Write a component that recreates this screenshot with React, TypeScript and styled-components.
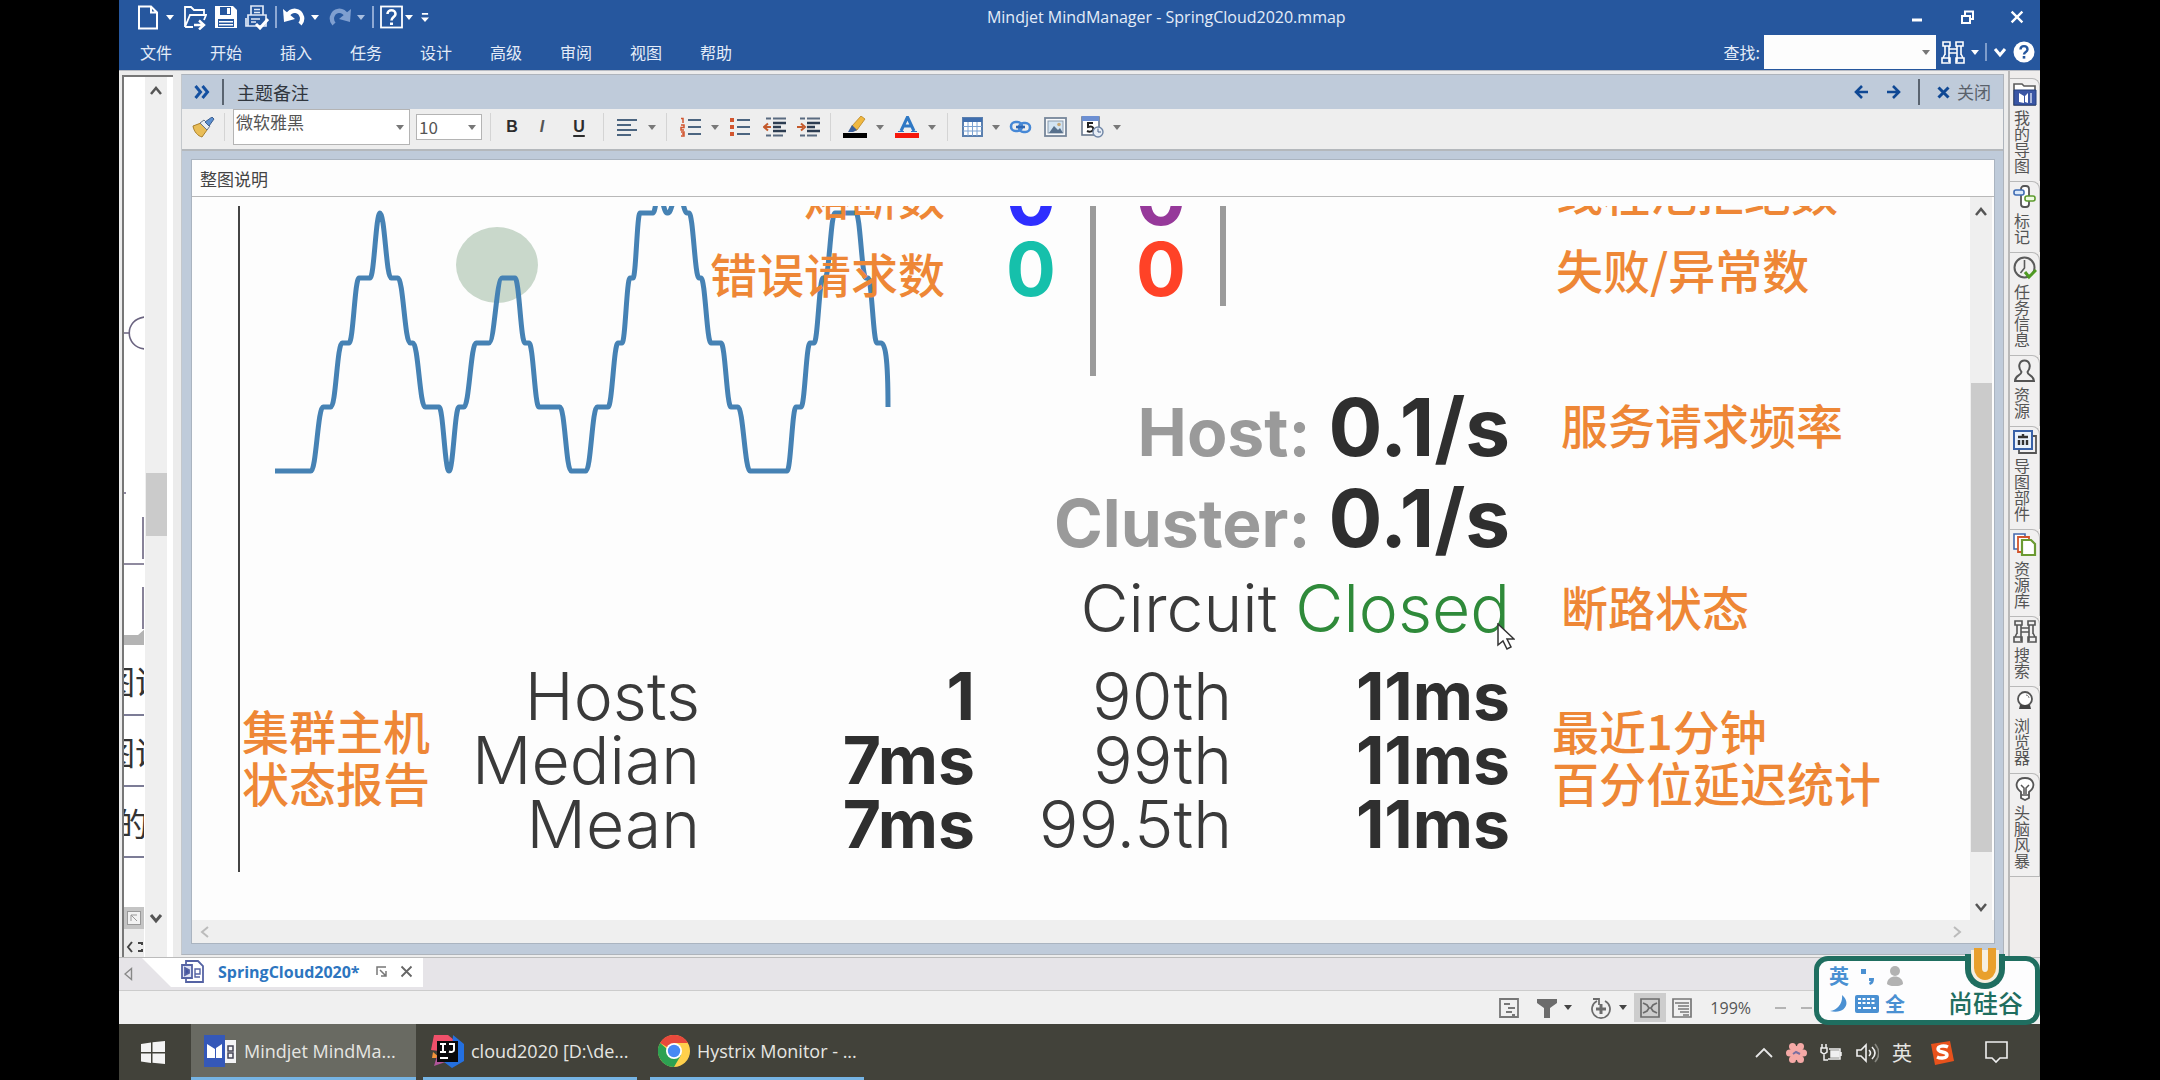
import React from "react";
import styled, { createGlobalStyle, css } from "styled-components";

const ui = `"Open Sans", "Noto Sans CJK SC", sans-serif`;
const cjk = `"Noto Sans CJK SC", sans-serif`;
const figureFont = `Inter, "Liberation Sans", "Noto Sans CJK SC", sans-serif`;

const GlobalStyle = createGlobalStyle`
  * { box-sizing: border-box; }
  body { margin: 0; background: #000; font-family: ${ui}; }
  button, input, select { font: inherit; color: inherit; margin: 0; }
  button { background: none; border: 0; padding: 0; display: inline-flex; align-items: center; justify-content: center; }
  svg { display: block; flex: none; }
`;

const Screen = styled.main`
  min-height: 100vh;
  padding: 0 120px 0 119px;
  display: flex;
  flex-direction: column;
`;

/* ---------- title and menu ---------- */
const Header = styled.header`
  background: #26579e;
  color: #fff;
  height: 70px;
  display: grid;
  grid-template-rows: 34px 36px;
`;
const TitleRow = styled.div`
  display: grid;
  grid-template-columns: 5fr auto 4fr;
  align-items: center;
`;
const QuickBar = styled.div`
  display: flex;
  align-items: center;
  padding-left: 19px;
`;
const Quick = styled.button<{ w: number }>`
  width: ${(p) => p.w}px;
  height: 28px;
  justify-content: flex-start;
`;
const QuickRule = styled.span`
  width: 2px;
  height: 22px;
  margin-right: 6px;
  background: #8ea9d4;
`;
const Title = styled.h1`
  margin: 0;
  font-size: 16px;
  font-weight: 400;
  line-height: 34px;
  color: #e4ecf8;
`;
const WindowButtons = styled.div`
  display: flex;
  justify-content: flex-end;
  padding-right: 10px;
  gap: 24px;
`;
const WindowButton = styled.button`
  width: 26px;
  height: 34px;
`;
const MenuRow = styled.div`
  display: flex;
  justify-content: space-between;
  padding-left: 2px;
`;
const Menus = styled.nav`
  display: flex;
`;
const Menu = styled.button`
  width: 70px;
  font: 16px/36px ${cjk};
  color: #e4ecf8;
`;
const Finder = styled.div`
  display: flex;
  align-items: center;
  padding-right: 5px;
`;
const FinderLabel = styled.label`
  font: 16px/36px ${cjk};
  color: #e4ecf8;
  padding-right: 4px;
`;
const FinderBox = styled.div`
  display: flex;
  align-items: center;
  width: 172px;
  height: 34px;
  padding-right: 6px;
  background: #fdfdfd;
  color: #777;
`;
const FinderInput = styled.input`
  flex: 1;
  min-width: 0;
  height: 34px;
  border: 0;
  background: transparent;
  color: #333;
  padding: 0 6px;
`;
const FinderTools = styled.div`
  display: flex;
  align-items: center;
  gap: 6px;
  padding-left: 5px;
`;

/* ---------- workspace ---------- */
const Workspace = styled.section`
  flex: 1;
  display: grid;
  grid-template-columns: 62px minmax(0, 1fr) 32px;
  background: #ececec;
  border-top: 1px solid #b8bcc4;
`;
const MapStrip = styled.aside`
  margin: 4px 8px 0 3px;
  display: grid;
  grid-template-columns: 20px 22px;
  column-gap: 1px;
  border-left: 2px solid #777;
  border-top: 2px solid #777;
  background: #fff;
`;
const MapCanvas = styled.div`
  overflow: hidden;
  display: flex;
  flex-direction: column;
`;
const MapNode = styled.div<{ shift: number }>`
  margin-left: ${(p) => p.shift}px;
  width: 96px;
  height: 71px;
  padding-top: 14px;
  font: 32px/42px ${cjk};
  color: #333;
  border-bottom: 2px solid #7c7c96;
`;
const MapFooter = styled.div`
  height: 50px;
  margin-top: auto;
  display: flex;
  flex-direction: column;
  align-items: center;
  gap: 12px;
  background: #ececec;
`;
const Track = styled.div`
  background: #efefef;
  display: flex;
  flex-direction: column;
  align-items: center;
  justify-content: space-between;
  color: #555;
  padding: 7px 0 32px;
`;
const Thumb = styled.div<{ top: number; tall: number }>`
  width: 21px;
  height: ${(p) => p.tall}px;
  margin: ${(p) => p.top}px 0 auto;
  background: #cbcbcb;
`;

const NotesPanel = styled.section`
  margin: 3px 4px 2px 0;
  border: 1px solid #aeb4bc;
  border-left-color: #c4c8cc;
  background: #bfcbda;
  display: flex;
  flex-direction: column;
`;
const PanelHead = styled.div`
  height: 34px;
  display: flex;
  align-items: center;
  padding: 0 12px 0 12px;
  color: #0f4894;
`;
const HeadRule = styled.span`
  width: 2px;
  height: 26px;
  background: #5a6470;
`;
const PanelTitle = styled.h2`
  margin: 0;
  padding-left: 13px;
  flex: 1;
  font: 18px/34px ${cjk};
  color: #30363e;
`;
const CloseButton = styled.button`
  gap: 7px;
  font: 17px/34px ${cjk};
  span { color: #59616b; }
`;
const HeadActions = styled.div`
  display: flex;
  align-items: center;
  gap: 17px;
`;
const ToolBar = styled.div`
  height: 42px;
  background: #eee;
  border-bottom: 2px solid #b4b8bc;
  display: flex;
  align-items: center;
  padding: 0 0 4px 10px;
`;
const ToolRule = styled.span<{ left: number; right: number }>`
  width: 1px;
  height: 28px;
  margin: 0 ${(p) => p.right}px 0 ${(p) => p.left}px;
  background: #d4d4d4;
`;
const Tool = styled.button<{ w: number }>`
  width: ${(p) => p.w}px;
  height: 28px;
  color: #787878;
  gap: 9px;
  justify-content: flex-start;
`;
const SelectBox = styled.div<{ w: number; tall: number }>`
  display: flex;
  align-items: center;
  width: ${(p) => p.w}px;
  height: ${(p) => p.tall}px;
  background: #fff;
  border: 1px solid #b4b4b4;
  color: #777;
  padding-right: 5px;
  margin-right: 6px;
`;
const Select = styled.select`
  appearance: none;
  flex: 1;
  min-width: 0;
  border: 0;
  background: transparent;
  padding: 0 0 0 2px;
  font: 17px/24px ${cjk};
  color: #555;
  align-self: flex-start;
`;
const LetterTool = styled.button<{ look: "b" | "i" | "u" }>`
  width: 34px;
  height: 28px;
  font: bold 16px/18px "Liberation Sans", sans-serif;
  color: #2c2c2c;
  ${(p) => p.look === "i" && css`font-style: italic; color: #555; margin-left: -4px;`}
  ${(p) => p.look === "u" && css`text-decoration: underline; text-decoration-thickness: 2px; text-underline-offset: 3px; margin-left: 3px;`}
`;
const NoteFrame = styled.div`
  flex: 1;
  margin: 8px 8px 10px 9px;
  border: 1px solid #aab4c0;
  background: #fdfdfd;
  display: flex;
  flex-direction: column;
`;
const NoteTitle = styled.div`
  height: 37px;
  padding: 2px 0 0 8px;
  font: 17px/34px ${cjk};
  color: #444;
  border-bottom: 1px solid #b8b8b8;
`;
const NoteBody = styled.div`
  flex: 1;
  display: grid;
  grid-template-columns: minmax(0, 1fr) 22px;
  padding-right: 2px;
`;
const NoteTrack = styled(Track)`
  padding: 8px 0 6px;
`;
const HTrack = styled.div`
  height: 23px;
  background: #efefef;
  display: flex;
  align-items: center;
  justify-content: space-between;
  padding: 0 30px 0 6px;
  color: #bbb;
`;

/* ---------- figure in the note ---------- */
const Figure = styled.div`
  position: relative;
  margin: 9px 0 48px 46px;
  border-left: 2px solid #444;
  overflow: hidden;
  padding-bottom: 16px;
  font-family: ${figureFont};
  color: #2f2f2f;
  white-space: nowrap;
`;
const Metrics = styled.div`
  display: grid;
  grid-template-columns: 459px 246px 151px 130px 284px 1fr;
  grid-template-rows: 109px 66px 91px 91px 91px;
`;
const ChartCell = styled.div`
  grid-column: 1 / 3;
  grid-row: 1 / 5;
`;
const Captions = styled.div<{ col: number; up: number }>`
  grid-column: ${(p) => p.col};
  grid-row: 1;
  margin-top: -${(p) => p.up}px;
  font: 500 47px/78px ${cjk};
  color: #ee8736;
  padding-left: ${(p) => (p.col === 6 ? 46 : 0)}px;
  text-align: ${(p) => (p.col === 6 ? "left" : "right")};
`;
const Counters = styled.div<{ col: number; tall: number }>`
  grid-column: ${(p) => p.col};
  grid-row: 1 / 3;
  height: ${(p) => p.tall}px;
  border-right: 6px solid #9b9b9b;
  padding-right: 34px;
  text-align: right;
  font-size: 74px;
  line-height: 71px;
  font-weight: 700;
`;
const CounterStack = styled.div`
  margin-top: -43px;
`;
const Count = styled.div<{ tone: string }>`
  color: ${(p) => p.tone};
`;
const Rate = styled.div<{ row: number }>`
  grid-column: 3 / 6;
  grid-row: ${(p) => p.row};
  display: flex;
  justify-content: flex-end;
  align-items: baseline;
  line-height: 91px;
`;
const RateName = styled.span`
  font-size: 66px;
  font-weight: 700;
  color: #9a9a9a;
  padding-right: 18px;
`;
const RateValue = styled.span`
  font-size: 80px;
  font-weight: 700;
`;
const Circuit = styled.span<{ ok?: boolean }>`
  font: 300 66px/91px ${figureFont};
  color: ${(p) => (p.ok ? "#2f8a3a" : "#3a3a3a")};
  padding-right: ${(p) => (p.ok ? 0 : 18)}px;
`;
const RateCaption = styled.div<{ row: number }>`
  grid-column: 6;
  grid-row: ${(p) => p.row};
  padding-left: 51px;
  font: 500 47px/86px ${cjk};
  color: #ee8736;
`;
const Stats = styled.div`
  display: flex;
  align-items: center;
  padding-top: 10px;
`;
const StatCaption = styled.div<{ w: number; inset: number }>`
  min-width: ${(p) => p.w}px;
  padding: 0 0 8px ${(p) => p.inset}px;
  font: 500 47px/52px ${cjk};
  color: #ee8736;
`;
const StatTable = styled.table`
  border-collapse: collapse;
  table-layout: fixed;
  width: 1080px;
  th, td { padding: 0; height: 64px; line-height: 64px; text-align: right; }
  th { font: 300 66px/64px ${figureFont}; color: #3a3a3a; }
  td { font-size: 66px; font-weight: 700; }
`;
const Pointer = styled.svg`
  position: absolute;
  left: 1257px;
  top: 417px;
`;

/* ---------- side tabs ---------- */
const SideTabs = styled.nav`
  border-left: 2px solid #b9b9b9;
  padding-top: 7px;
  display: flex;
  flex-direction: column;
  background: #efedec;
`;
const SideTab = styled.button`
  flex-direction: column;
  align-items: flex-start;
  padding: 3px 0 7px 3px;
  gap: 4px;
  border: 1px solid #b9b9b9;
  border-left: 0;
  border-bottom: 0;
  border-top-right-radius: 8px;
  background: #f1f0f0;
  &:last-child { border-bottom: 1px solid #b9b9b9; }
  span {
    writing-mode: vertical-rl;
    font: 16px/17px ${cjk};
    color: #555;
  }
`;

/* ---------- document tabs and status ---------- */
const DocTabs = styled.div`
  height: 34px;
  background: #e6e4e8;
  border-top: 1px solid #bbb;
  border-bottom: 1px solid #ccc;
  display: flex;
  align-items: flex-start;
`;
const TabScroll = styled.button`
  width: 23px;
  height: 32px;
  padding-right: 4px;
`;
const DocTab = styled.div`
  width: 281px;
  height: 29px;
  padding: 0 4px 2px 39px;
  display: flex;
  align-items: center;
  background: #fff;
  clip-path: polygon(0 0, 100% 0, 100% 100%, 29px 100%);
`;
const DocName = styled.span`
  flex: 1;
  padding-left: 13px;
  font-size: 16px;
  font-weight: 700;
  line-height: 26px;
  color: #2d75bf;
`;
const IconButton = styled.button<{ on?: boolean }>`
  height: 29px;
  padding: 0 6px;
  gap: 7px;
  color: #666;
  background: ${(p) => (p.on ? "#cdcdcd" : "transparent")};
`;
const StatusBar = styled.footer`
  position: relative;
  height: 33px;
  background: #f0f0f0;
  display: flex;
  justify-content: flex-end;
  align-items: center;
  padding-right: 228px;
  font: 16px/32px ${ui};
  color: #555;
`;
const Filters = styled.div`
  display: flex;
  gap: 6px;
  padding-right: 1px;
`;
const Zoom = styled.span`
  padding: 0 24px 0 12px;
`;
const Dashes = styled.span`
  display: flex;
  gap: 15px;
  i { width: 11px; height: 2px; background: #b4b4b4; }
`;
const Ime = styled.aside`
  position: absolute;
  right: 0;
  bottom: -1px;
  width: 226px;
  height: 69px;
  border: 5px solid #1f6e60;
  border-radius: 14px;
  background: #fdfdfe;
  display: flex;
  justify-content: space-between;
  padding: 1px 12px 0 8px;
`;
const ImeGrid = styled.div`
  display: grid;
  grid-template-columns: 24px 26px 24px;
  grid-template-rows: 28px 28px;
  column-gap: 3px;
  align-items: center;
  justify-items: center;
  font: bold 20px/28px ${cjk};
  color: #4a90d2;
`;
const Brand = styled.div`
  display: flex;
  flex-direction: column;
  align-items: center;
  margin-top: -16px;
  font: 500 25px/25px ${cjk};
  color: #1f6e60;
`;

/* ---------- taskbar ---------- */
const Taskbar = styled.footer`
  height: 57px;
  background: #42423a;
  display: flex;
  color: #e6e6e2;
`;
const Start = styled.button`
  width: 72px;
  height: 57px;
  padding-right: 4px;
`;
const Task = styled.button<{ w: number; active?: boolean; gap: number }>`
  width: ${(p) => p.w}px;
  height: 57px;
  justify-content: flex-start;
  gap: 7px;
  margin-right: ${(p) => p.gap}px;
  padding-left: ${(p) => (p.active ? 13 : 8)}px;
  background: ${(p) => (p.active ? "#696a62" : "transparent")};
  border-bottom: 4px solid #76b4e4;
  font-size: 18px;
`;
const Tray = styled.div`
  margin-left: auto;
  display: flex;
  align-items: center;
  padding-right: 32px;
  gap: 13px;
  font: 20px/56px ${cjk};
`;
const TrayLetter = styled.span`
  padding-right: 5px;
`;
const Notify = styled.button`
  margin-left: 18px;
`;

/* ---------- drawings ---------- */
const Caret = ({ c = "currentColor", s = 8 }: { c?: string; s?: number }) => (
  <svg width={s} height="5" viewBox="0 0 8 5"><path d="M0 0h8L4 5z" fill={c} /></svg>
);
const Chevron = ({ turn, w = 2.5 }: { turn: number; w?: number }) => (
  <svg width="14" height="14" viewBox="0 0 14 14">
    <path d="M2 10l5-6 5 6" fill="none" stroke="currentColor" strokeWidth={w} transform={`rotate(${turn} 7 7)`} />
  </svg>
);
const Rule = () => <svg width="2" height="18"><path d="M1 0v18" stroke="#9db5da" strokeWidth="1.5" /></svg>;
const NewIcon = () => (
  <svg width="21" height="25" viewBox="0 0 21 25" fill="none" stroke="#fff" strokeWidth="2"><path d="M1 1.5h12l6 6v16H1zM13 1.5v6h6" /></svg>
);
const OpenIcon = () => (
  <svg width="24" height="25" viewBox="0 0 24 25" fill="none" stroke="#fff" strokeWidth="1.8"><path d="M2 22V2h6l3 3h10v6M2 22l5-12h16l-2 5M2 22h8" /><path d="M11 20h8M16 15.500l5 4.500-5 4.500" strokeWidth="2.400" /></svg>
);
const SaveIcon = () => (
  <svg width="24" height="24" viewBox="0 0 24 24"><path d="M1 1h18l4 4v18H1z" fill="#fff" /><path d="M6 2h11v8H6zM4 14h16v8H4z" fill="#26579e" /><path d="M13 3h3v6h-3zM5 16h14v1.500H5zM5 19h14v1.500H5z" fill="#fff" /></svg>
);
const PrintIcon = () => (
  <svg width="24" height="25" viewBox="0 0 24 25" fill="none" stroke="#dfe8f6" strokeWidth="1.700"><path d="M6 10V1h12v9M9 4.500h6M9 7.500h6M3 10h18v11H3zM1 13v8h3M6 14h9M6 17h5" /><path d="M11 19l4 4 8-9" stroke="#fff" strokeWidth="3" /></svg>
);
const UndoIcon = ({ c, flip }: { c: string; flip?: boolean }) => (
  <svg width="22" height="18" viewBox="0 0 22 18"><g transform={flip ? "translate(22 0) scale(-1 1)" : undefined}><path d="M4 8C9 0 17 2 19 9c.5 3 0 5-2 7" fill="none" stroke={c} strokeWidth="4.400" /><path d="M0 1l1 13 11-3z" fill={c} /></g></svg>
);
const HelpBox = () => (
  <svg width="23" height="24" viewBox="0 0 23 24" fill="none" stroke="#fff"><rect x="1" y="1.500" width="21" height="21" strokeWidth="1.800" /><path d="M7.500 9c0-5 8-5 8 0 0 3-4 3-4 6.500" strokeWidth="2.600" /><path d="M11.500 17.500v2.500" strokeWidth="3" /></svg>
);
const Customize = () => <svg width="8" height="11" viewBox="0 0 9 12" fill="#fff"><path d="M1 1h7v2H1zM0 6h9L4.500 11z" /></svg>;
const Binoculars = ({ c = "#fff", s = 24 }: { c?: string; s?: number }) => (
  <svg width={s} height={s - 1} viewBox="0 0 24 23" fill="none" stroke={c} strokeWidth="1.600"><path d="M2 1h7v4H2zM15 1h7v4h-7zM4 5v9M8 5v16M16 5v16M20 5v9M1 17h8v5H1zM15 17h8v5h-8zM4 13l-2 4M20 13l2 4M8 8h8M8 12h8" /></svg>
);
const HelpRound = () => (
  <svg width="22" height="22" viewBox="0 0 22 22"><circle cx="11" cy="11" r="10.500" fill="#fff" /><path d="M7.500 8.500c0-4.500 7-4.500 7 0 0 2.500-3.500 2.500-3.500 5" fill="none" stroke="#26579e" strokeWidth="2.400" /><path d="M11 15v2.600" stroke="#26579e" strokeWidth="2.600" /></svg>
);
const DoubleChevron = () => (
  <svg width="28" height="14" viewBox="0 0 28 14" fill="none" stroke="#1450a0" strokeWidth="3"><path d="M1.500 1l5 6-5 6M8.500 1l5 6-5 6" /></svg>
);
const Arrow = ({ flip }: { flip?: boolean }) => (
  <svg width="15" height="14" viewBox="0 0 15 14" fill="none" stroke="#0f4894" strokeWidth="2.600"><path d="M14 7H2M8 1L2 7l6 6" transform={flip ? "translate(15 0) scale(-1 1)" : undefined} /></svg>
);
const Cross = ({ c = "#0f4894", s = 13, w = 3 }: { c?: string; s?: number; w?: number }) => (
  <svg width={s} height={s} viewBox="0 0 13 13"><path d="M1.500 1.500l10 10M11.500 1.500l-10 10" stroke={c} strokeWidth={w} /></svg>
);
const Brush = () => (
  <svg width="23" height="21" viewBox="0 0 23 21"><path d="M1 9l8-3 6 7-5 7c-4-1-8-5-9-11z" fill="#e9bd57" stroke="#a9802c" /><path d="M8 6l4-3 6 6-3 4z" fill="#e9eef5" stroke="#66748a" /><path d="M13 5l7-5 2 2-5 7z" fill="#5b8fd0" stroke="#3e5f8f" /></svg>
);
const Lines = () => (
  <svg width="22" height="19" viewBox="0 0 22 19" stroke="#4c6580" strokeWidth="2.200"><path d="M0 2h20M0 7h14M0 12h20M0 17h14" /></svg>
);
const ListIcon = ({ dots }: { dots?: boolean }) => (
  <svg width="22" height="20" viewBox="0 0 22 20" fill="none"><path d="M8 3h13M8 10h13M8 17h13" stroke="#4c6580" strokeWidth="2.200" />
    {dots ? <path d="M1 1h4v4H1zM1 8h4v4H1zM1 15h4v4H1z" fill="#d2562f" /> : <path d="M1 1.500h2V6M1 8h3v2.500H1V13h3M1 15h3v4H1M2 17h2" stroke="#d2562f" strokeWidth="1.500" />}
  </svg>
);
const Dent = ({ out }: { out?: boolean }) => (
  <svg width="23" height="20" viewBox="0 0 23 20" fill="none"><path d="M3 1.500h5M10 1.500h13M3 18.500h5M10 18.500h10" stroke="#5a6b80" strokeWidth="2" /><path d="M10 6h13M10 10h8M10 14h13" stroke="#2d3d52" strokeWidth="2.600" /><path d={out ? "M8 10H2M5 6.500L1 10l4 3.500" : "M0 10h6M4 6.500L8 10l-4 3.500"} stroke="#c45a2c" strokeWidth="2" /></svg>
);
const Highlighter = () => (
  <svg width="24" height="23" viewBox="0 0 24 23"><path d="M9 10L18 0l4 3-8 11-4 1z" fill="#f0b840" stroke="#b98420" strokeWidth=".8" /><path d="M9 9l5 5-4 2-5 0z" fill="#3b5f99" /><path d="M0 17h24v5H0z" fill="#000" /></svg>
);
const FontColor = () => (
  <svg width="24" height="23" viewBox="0 0 24 23"><path d="M6 15L12.500 1l6.500 14M9 10h7" fill="none" stroke="#2f78c4" strokeWidth="3" /><path d="M3 15.500h6M16 15.500h6" stroke="#2f78c4" /><path d="M0 17h24v5H0z" fill="#f5180c" /></svg>
);
const GridIcon = () => (
  <svg width="21" height="20" viewBox="0 0 21 20"><rect x="1" y="1" width="19" height="18" fill="#fff" stroke="#5a7fae" strokeWidth="2" /><path d="M1 1h19v4H1z" fill="#3f6eae" /><path d="M6 5v14M10.500 5v14M15 5v14M1 9.500h19M1 14h19" stroke="#7da3d2" /></svg>
);
const LinkIcon = () => (
  <svg width="23" height="14" viewBox="0 0 23 14" fill="none" stroke="#4688d6" strokeWidth="2.600"><rect x="2" y="2" width="11" height="9" rx="4.500" /><rect x="10" y="3" width="11" height="9" rx="4.500" /><path d="M7 7h9" stroke="#2f65b0" /></svg>
);
const PhotoIcon = () => (
  <svg width="23" height="20" viewBox="0 0 23 20"><rect x="1" y="1" width="21" height="18" fill="#f7f9fb" stroke="#76869a" strokeWidth="1.800" /><rect x="4" y="4" width="15" height="12" fill="#d3e4f2" stroke="#8b9bae" /><path d="M5 16l5-7 4 4 2-2 3 5z" fill="#57708c" /><circle cx="15" cy="7.500" r="1.800" fill="#c8a876" /></svg>
);
const DateIcon = () => (
  <svg width="23" height="22" viewBox="0 0 23 22"><rect x="1" y="1" width="17" height="18" fill="#fff" stroke="#68778c" strokeWidth="1.600" /><path d="M1 0h17v5H1z" fill="#6c8fd2" /><path d="M12 7H7v4c4-1 6 0 5 3-1 2-4 2-6 1" fill="none" stroke="#222" strokeWidth="2" /><circle cx="17" cy="16" r="5" fill="#e8eef6" stroke="#7086a6" strokeWidth="1.400" /><path d="M17 12.500V16h3" stroke="#4b6288" fill="none" /></svg>
);

const sideDrawings: Record<string, React.ReactNode> = {
  maps: (<><path d="M1 5V2h8l2 2h11v19H1z" fill="#fff" stroke="#5b5b5b" strokeWidth="1.600" /><path d="M1 8h22v15H1z" fill="#3a56a5" stroke="#24407f" /><path d="M6 11l5 3v7l-5-1zM12 14l3-3v10l-3-1z" fill="#fff" /><path d="M17 11h2v10h-2z" fill="#aab7dc" /></>),
  marks: (<><rect x="8" y="1" width="8" height="21" rx="3" fill="#fff" stroke="#555" strokeWidth="1.800" /><rect x="1" y="5" width="10" height="5" rx="2" fill="#dbe9fa" stroke="#3f6cb4" strokeWidth="1.600" /><rect x="12" y="11" width="10" height="5" rx="2" fill="#eefbe2" stroke="#5d9b2e" strokeWidth="1.600" /></>),
  tasks: (<><circle cx="11.500" cy="11.500" r="10" fill="none" stroke="#5b5b5b" strokeWidth="2" /><path d="M11.500 4v8l-4 5" fill="none" stroke="#5b5b5b" strokeWidth="1.600" /><path d="M12 16l4 5 7-7" fill="none" stroke="#4f9a22" strokeWidth="3" /></>),
  people: (<path d="M8.500 13C4 7 7 1.500 11.500 1.500s7.500 5.500 3 11.500c0 4 6.500 3 6.500 9H2c0-6 6-5 6.500-9z" fill="none" stroke="#555" strokeWidth="2" />),
  parts: (<><path d="M6 20v3h17V6h-3" fill="none" stroke="#555" strokeWidth="1.800" /><rect x="1" y="1" width="18" height="18" fill="#eaf2fc" stroke="#3861a8" strokeWidth="2" /><path d="M5 7h10M10 4v3M6 10v5M10 10v5M14 10v5" stroke="#333" strokeWidth="2.400" /></>),
  library: (<><path d="M1 1h11v15H1z" fill="#fff" stroke="#4668ac" strokeWidth="1.600" /><path d="M5 4h11v15H5z" fill="#fff" stroke="#d2552d" strokeWidth="1.800" /><path d="M9 7h9l4 4v11H9z" fill="#fff" stroke="#6b9a32" strokeWidth="2.200" /></>),
  globe: (<><circle cx="12" cy="9" r="7" fill="#fff" stroke="#555" strokeWidth="1.800" /><path d="M13 5c2 0 3 2 3 3" fill="none" stroke="#777" /><path d="M7 15h10l1 4H6z" fill="#444" /></>),
  bulb: (<><path d="M8 15C0 9 4 1 12 1s12 8 4 14v6l-4 2-4-2z" fill="#fff" stroke="#555" strokeWidth="1.800" /><path d="M8 8l3 3v6M16 8l-3 3v6M8 18h8" fill="none" stroke="#555" strokeWidth="1.500" /></>),
};
const sideTabs: [string, string][] = [
  ["maps", "我的导图"], ["marks", "标记"], ["tasks", "任务信息"], ["people", "资源"], ["parts", "导图部件"],
  ["library", "资源库"], ["search", "搜索"], ["globe", "浏览器"], ["bulb", "头脑风暴"],
];

/* Start and end of every level stretch of the traffic line, in figure coordinates. */
const traffic: [number, number, number][] = [
  [35, 71, 265], [83, 91, 201], [102, 109, 137], [119, 130, 72], [140, 140, 7], [151, 158, 72], [170, 173, 137],
  [185, 199, 201], [209, 209, 265], [219, 224, 201], [236, 249, 137], [262, 275, 72], [285, 289, 137], [299, 320, 201],
  [331, 346, 265], [357, 368, 201], [378, 382, 137], [390, 393, 72], [400, 413, 7], [418, 420, -8], [427, 428, 7],
  [436, 440, -8], [447, 449, 7], [459, 461, 72], [471, 481, 137], [491, 498, 201], [510, 547, 265], [556, 561, 201],
  [570, 574, 137], [583, 585, 72], [595, 616, 7], [626, 628, 72], [637, 641, 137],
];
const trafficPath =
  traffic.map(([a, b, y], i) => {
    if (i === 0) return `M${a} ${y}H${b}`;
    const [, px, py] = traffic[i - 1];
    const d = (a - px) * 0.42;
    return `C${px + d} ${py} ${a - d} ${y} ${a} ${y}H${b}`;
  }).join("") + "C645 137 648 150 648 201";

export default function App() {
  return (
    <>
      <GlobalStyle />
      <Screen>
        <Header>
          <TitleRow>
            <QuickBar>
              <Quick w={28} aria-label="新建"><NewIcon /></Quick>
              <Quick w={17} aria-label="新建选项"><Caret /></Quick>
              <Quick w={31} aria-label="打开"><OpenIcon /></Quick>
              <Quick w={31} aria-label="保存"><SaveIcon /></Quick>
              <Quick w={30} aria-label="打印"><PrintIcon /></Quick>
              <QuickRule />
              <Quick w={28} aria-label="撤消"><UndoIcon c="#fff" /></Quick>
              <Quick w={18} aria-label="撤消选项"><Caret /></Quick>
              <Quick w={28} aria-label="恢复"><UndoIcon c="#7f9fd0" flip /></Quick>
              <Quick w={15} aria-label="恢复选项"><Caret c="#a9bfe0" /></Quick>
              <QuickRule />
              <Quick w={25} aria-label="帮助主题"><HelpBox /></Quick>
              <Quick w={16} aria-label="帮助选项"><Caret /></Quick>
              <Quick w={12} aria-label="自定义工具栏"><Customize /></Quick>
            </QuickBar>
            <Title>Mindjet MindManager - SpringCloud2020.mmap</Title>
            <WindowButtons>
              <WindowButton aria-label="最小化"><svg width="12" height="12"><path d="M1 9h10" stroke="#fff" strokeWidth="3" /></svg></WindowButton>
              <WindowButton aria-label="还原"><svg width="13" height="14" fill="none" stroke="#fff" strokeWidth="2"><path d="M1 6h8v7H1zM4 5V1.500h8V9h-3" /></svg></WindowButton>
              <WindowButton aria-label="关闭窗口"><Cross c="#fff" s={14} w={2.2} /></WindowButton>
            </WindowButtons>
          </TitleRow>
          <MenuRow>
            <Menus>
              {["文件", "开始", "插入", "任务", "设计", "高级", "审阅", "视图", "帮助"].map((m) => <Menu key={m}>{m}</Menu>)}
            </Menus>
            <Finder>
              <FinderLabel htmlFor="find">查找:</FinderLabel>
              <FinderBox><FinderInput id="find" /><Caret /></FinderBox>
              <FinderTools>
                <Binoculars />
                <Caret />
                <Rule />
                <Chevron turn={180} w={3} />
                <HelpRound />
              </FinderTools>
            </Finder>
          </MenuRow>
        </Header>

        <Workspace>
          <MapStrip>
            <MapCanvas>
              <svg width="21" height="568" viewBox="0 0 21 568" fill="none" stroke="#6b6480" strokeWidth="1.600">
                <path d="M0 256h5M21 240C0 242 0 270 21 272M0 416h2M19 440v42M0 487h21M19 510v42" />
                <path d="M0 558h14l7-6v16H0z" fill="#b4b4b4" stroke="none" />
              </svg>
              <MapNode shift={-21}>图说</MapNode>
              <MapNode shift={-21}>图说</MapNode>
              <MapNode shift={-8}>的</MapNode>
              <MapFooter>
                <svg width="21" height="22" viewBox="0 0 21 22" fill="none" stroke="#999"><rect width="21" height="22" fill="#c4c4c4" stroke="none" /><rect x="3.500" y="4.500" width="13" height="13" fill="#f2f2f2" /><path d="M7 14V8h6M7 8l6 6" /></svg>
                <svg width="19" height="12" viewBox="0 0 19 12" fill="none" stroke="#444" strokeWidth="2"><path d="M7 1L3 6l4 5M13 2h4v2M13 10h4V8" /></svg>
              </MapFooter>
            </MapCanvas>
            <Track>
              <Chevron turn={0} />
              <Thumb top={375} tall={63} />
              <Chevron turn={180} w={3} />
            </Track>
          </MapStrip>

          <NotesPanel>
            <PanelHead>
              <DoubleChevron />
              <HeadRule />
              <PanelTitle>主题备注</PanelTitle>
              <HeadActions>
                <button aria-label="上一个"><Arrow /></button>
                <button aria-label="下一个"><Arrow flip /></button>
                <HeadRule />
                <CloseButton><Cross /><span>关闭</span></CloseButton>
              </HeadActions>
            </PanelHead>
            <ToolBar>
              <Tool w={32} aria-label="格式刷"><Brush /></Tool>
              <ToolRule left={0} right={8} />
              <SelectBox w={177} tall={36}>
                <Select aria-label="字体"><option>微软雅黑</option></Select><Caret />
              </SelectBox>
              <SelectBox w={66} tall={26}>
                <Select aria-label="字号"><option>10</option></Select><Caret />
              </SelectBox>
              <ToolRule left={2} right={4} />
              <LetterTool look="b">B</LetterTool>
              <LetterTool look="i">I</LetterTool>
              <LetterTool look="u">U</LetterTool>
              <ToolRule left={7} right={13} />
              <Tool w={49} aria-label="对齐"><Lines /><Caret /></Tool>
              <ToolRule left={0} right={13} />
              <Tool w={49} aria-label="编号"><ListIcon /><Caret /></Tool>
              <Tool w={34} aria-label="项目符号"><ListIcon dots /></Tool>
              <Tool w={34} aria-label="减少缩进"><Dent out /></Tool>
              <Tool w={33} aria-label="增加缩进"><Dent /></Tool>
              <ToolRule left={0} right={12} />
              <Tool w={52} aria-label="突出显示"><Highlighter /><Caret /></Tool>
              <Tool w={52} aria-label="字体颜色"><FontColor /><Caret /></Tool>
              <ToolRule left={0} right={14} />
              <Tool w={47} aria-label="表格"><GridIcon /><Caret /></Tool>
              <Tool w={35} aria-label="超链接"><LinkIcon /></Tool>
              <Tool w={37} aria-label="图片"><PhotoIcon /></Tool>
              <Tool w={46} aria-label="日期"><DateIcon /><Caret /></Tool>
            </ToolBar>
            <NoteFrame>
              <NoteTitle>整图说明</NoteTitle>
              <NoteBody>
                <Figure>
                  <Metrics>
                    <ChartCell>
                      <svg width="660" height="280" viewBox="0 0 660 280">
                        <ellipse cx="257" cy="59" rx="41" ry="38" fill="#c9d8cb" />
                        <path d={trafficPath} fill="none" stroke="#4682b4" strokeWidth="5" strokeLinejoin="round" />
                      </svg>
                    </ChartCell>
                    <Captions col={2} up={50}><div>熔断数</div><div>错误请求数</div></Captions>
                    <Counters col={3} tall={170}><CounterStack><Count tone="#2e2eff">0</Count><Count tone="#16c0ab">0</Count></CounterStack></Counters>
                    <Counters col={4} tall={100}><CounterStack><Count tone="#96399a">0</Count><Count tone="#ff4227">0</Count></CounterStack></Counters>
                    <Captions col={6} up={54}><div>线程池拒绝数</div><div>失败/异常数</div></Captions>
                    <Rate row={3}><RateName>Host:</RateName><RateValue>0.1/s</RateValue></Rate>
                    <RateCaption row={3}>服务请求频率</RateCaption>
                    <Rate row={4}><RateName>Cluster:</RateName><RateValue>0.1/s</RateValue></Rate>
                    <Rate row={5}><Circuit>Circuit</Circuit><Circuit ok>Closed</Circuit></Rate>
                    <RateCaption row={5}>断路状态</RateCaption>
                  </Metrics>
                  <Stats>
                    <StatCaption w={190} inset={2}>集群主机<br />状态报告</StatCaption>
                    <StatTable>
                      <colgroup><col width="270" /><col width="275" /><col width="257" /><col width="278" /></colgroup>
                      <tbody>
                        <tr><th scope="row">Hosts</th><td>1</td><th scope="row">90th</th><td>11ms</td></tr>
                        <tr><th scope="row">Median</th><td>7ms</td><th scope="row">99th</th><td>11ms</td></tr>
                        <tr><th scope="row">Mean</th><td>7ms</td><th scope="row">99.5th</th><td>11ms</td></tr>
                      </tbody>
                    </StatTable>
                    <StatCaption w={300} inset={42}>最近1分钟<br />百分位延迟统计</StatCaption>
                  </Stats>
                  <Pointer width="18" height="28" viewBox="0 0 18 28"><path d="M1 1v21l5-4 4 8 4-2-4-8h7z" fill="#fff" stroke="#333" strokeWidth="1.500" /></Pointer>
                </Figure>
                <NoteTrack>
                  <Chevron turn={0} />
                  <Thumb top={164} tall={469} />
                  <Chevron turn={180} />
                </NoteTrack>
              </NoteBody>
              <HTrack><Chevron turn={-90} w={2} /><Chevron turn={90} w={2} /></HTrack>
            </NoteFrame>
          </NotesPanel>

          <SideTabs>
            {sideTabs.map(([id, name]) => (
              <SideTab key={id}>
                {id === "search" ? <Binoculars c="#555" /> : <svg width="24" height="24" viewBox="0 0 24 24">{sideDrawings[id]}</svg>}
                <span>{name}</span>
              </SideTab>
            ))}
          </SideTabs>
        </Workspace>

        <DocTabs>
          <TabScroll aria-label="向左滚动"><svg width="9" height="14"><path d="M7.500 1.500v11L1 7z" fill="none" stroke="#888" strokeWidth="1.400" /></svg></TabScroll>
          <DocTab>
            <svg width="24" height="23" viewBox="0 0 24 23" fill="none" stroke="#5563a4" strokeWidth="1.800"><path d="M5 5V1h12l5 5v16H5v-4" /><path d="M1 5h10v13H1z" fill="#dfe3f4" /><path d="M4 8v7l4-2V10z" fill="#4253a0" /><path d="M14 9h5v5h-5zM14 14v3h5" strokeWidth="1.400" /></svg>
            <DocName>SpringCloud2020*</DocName>
            <IconButton aria-label="浮动"><svg width="12" height="12" fill="none" stroke="#777" strokeWidth="1.500"><path d="M1 9V1h9M4 4l6 6M10 5v5H5" /></svg></IconButton>
            <IconButton aria-label="关闭文档"><Cross c="#666" s={13} w={1.8} /></IconButton>
          </DocTab>
        </DocTabs>
        <StatusBar>
          <Filters>
            <IconButton aria-label="导图视图"><svg width="20" height="20" fill="none" stroke="#777" strokeWidth="1.800"><path d="M1 1h18v18H1zM5 6h6M9 10h7M7 14h6M13 17h3" /></svg></IconButton>
            <IconButton aria-label="筛选"><svg width="20" height="20" fill="#6c6c6c"><path d="M0 1h20v4l-7 5v10H7V10L0 5z" /></svg><Caret c="#444" /></IconButton>
            <IconButton aria-label="展开"><svg width="22" height="22" fill="none" stroke="#6c6c6c" strokeWidth="1.800"><path d="M7 4a9 9 0 1 0 8 0M3 2h6v6" /><path d="M11 7v10M6 12h10" strokeWidth="3" /></svg><Caret c="#444" /></IconButton>
          </Filters>
          <IconButton on aria-label="普通视图"><svg width="20" height="20" fill="none" stroke="#6c6c6c" strokeWidth="1.700"><path d="M1 1h18v18H1zM3 5l4 2 2 3-2 3-4 2M17 5l-4 2-2 3 2 3 4 2M8 10h4" /></svg></IconButton>
          <IconButton aria-label="大纲视图"><svg width="20" height="20" fill="none" stroke="#777" strokeWidth="1.700"><path d="M1 1h18v18H1zM3 5h14M6 8h11M6 11h11M8 14h9M11 17h6" /></svg></IconButton>
          <Zoom>199%</Zoom>
          <Dashes><i /><i /></Dashes>
          <Ime>
            <ImeGrid>
              <span>英</span>
              <svg width="14" height="18" fill="#4a90d2"><path d="M1 2h5v5H1zM9 11h5c0 4-1 6-4 7l-1-2 2-2H9z" /></svg>
              <svg width="16" height="20" fill="#b2b2b2"><circle cx="8" cy="5" r="5" /><path d="M0 18c0-10 16-10 16 0-4 3-12 3-16 0z" /></svg>
              <svg width="18" height="18" fill="#4a90d2"><path d="M12 0c10 8 2 20-12 16C8 15 13 8 12 0z" /></svg>
              <svg width="24" height="18" viewBox="0 0 24 18"><rect width="24" height="18" rx="2" fill="#4a90d2" /><path d="M3 4h18M3 8h18" stroke="#fff" strokeWidth="2" strokeDasharray="3 1.500" /><path d="M3 13h3M8 13h8M18 13h3" stroke="#fff" strokeWidth="2" /></svg>
              <span>全</span>
            </ImeGrid>
            <Brand>
              <svg width="42" height="44" viewBox="0 0 42 44"><path d="M1 8v15a20 20 0 0 0 40 0V8z" fill="#1f6e60" /><path d="M7 4v19a14 14 0 0 0 28 0V4z" fill="#f6efe0" /><path d="M14 2v20a7 8 0 0 0 14 0V2" fill="none" stroke="#e9a02c" strokeWidth="8" /></svg>
              <span>尚硅谷</span>
            </Brand>
          </Ime>
        </StatusBar>

        <Taskbar>
          <Start aria-label="开始菜单"><svg width="24" height="23" viewBox="0 0 24 23" fill="#f4f4f4"><path d="M0 3l10-1.500V11H0zM11.500 1.300L24 0v11H11.500zM0 12.500h10V22L0 20.500zM11.500 12.500H24V23l-12.500-1.300z" /></svg></Start>
          <Task w={225} gap={7} active>
            <svg width="33" height="32" viewBox="0 0 33 32"><path d="M0 0h21v32H0z" fill="#3558b8" /><path d="M21 5h11v23H21z" fill="#f4f4f6" /><path d="M3 9l8 5v9H3zM12 13l6-4v14h-6z" fill="#fff" /><path d="M24 11h5v5h-5zM24 18h5v5h-5z" fill="none" stroke="#445" strokeWidth="1.500" /></svg>
            Mindjet MindMa...
          </Task>
          <Task w={214} gap={13}>
            <svg width="33" height="34" viewBox="0 0 33 34"><path d="M3 1h14l6 5-6 12L0 16z" fill="#f0506a" /><path d="M2 18l-1 6 8 0z" fill="#f4943a" /><path d="M3 32l3-10 14 4z" fill="#b0559a" /><path d="M22 1l11 9v17l-12 7-8-6 8-10z" fill="#2470e0" /><path d="M6 7h21v21H6z" fill="#0a0a0c" /><path d="M9 10h6M12 10v8M9 18h6M18 10h5v6c0 2-3 2.500-5 1.500M9 24h8" fill="none" stroke="#fff" strokeWidth="2" /></svg>
            cloud2020 [D:\de...
          </Task>
          <Task w={214} gap={0}>
            <svg width="32" height="32" viewBox="0 0 32 32"><circle cx="16" cy="16" r="16" fill="#ffd04c" /><path d="M16 16L2.100 8A16 16 0 0 1 29.900 8H16z" fill="#e8493c" /><path d="M2.100 8A16 16 0 0 0 16 32l7-12-7 0z" fill="#2da152" /><circle cx="16" cy="16" r="8" fill="#fff" /><circle cx="16" cy="16" r="6.200" fill="#4789f4" /></svg>
            Hystrix Monitor - ...
          </Task>
          <Tray>
            <svg width="18" height="11" fill="none" stroke="#e8e8e8" strokeWidth="1.800"><path d="M1 10l8-8 8 8" /></svg>
            <svg width="21" height="20" viewBox="0 0 21 20"><g fill="#f5a9a6"><circle cx="6.500" cy="3.500" r="3.500" /><circle cx="14.500" cy="3.500" r="3.500" /><circle cx="3.500" cy="10" r="3.500" /><circle cx="17.500" cy="10" r="3.500" /><circle cx="6.500" cy="16.500" r="3.500" /><circle cx="14.500" cy="16.500" r="3.500" /><circle cx="10.500" cy="10" r="7" /></g><path d="M7 11l3-2 4 2" stroke="#7a6fa0" strokeWidth="2" fill="none" /></svg>
            <svg width="23" height="20" fill="none" stroke="#f0f0f0" strokeWidth="1.500"><path d="M2 1v4M6 1v4M1 5h6v4l-3 2-3-2zM4 11v6h4" /><path d="M9 6h11v10H8M21 9v4" /><path d="M11 8h8v6h-8z" fill="#f0f0f0" /></svg>
            <svg width="23" height="20" fill="none" stroke="#f0f0f0" strokeWidth="1.600"><path d="M1 7h4l5-5v16l-5-5H1zM13 7c2 2 2 4 0 6M16 4c4 4 4 8 0 12" /><path d="M19 1c5 6 5 12 0 18" stroke="#85857e" /></svg>
            <TrayLetter>英</TrayLetter>
            <svg width="24" height="24" viewBox="0 0 24 24"><path d="M1 3l19-3 4 20-19 4z" fill="#e8521c" /><path d="M18 6c-4-2-10-1-10 2 0 4 9 2 9 6 0 3-6 4-10 2" fill="none" stroke="#fff" strokeWidth="3.400" /></svg>
            <Notify aria-label="通知"><svg width="23" height="23" fill="none" stroke="#f0f0f0" strokeWidth="1.600"><path d="M1 1h21v16h-7l-4 4-4-4H1z" /></svg></Notify>
          </Tray>
        </Taskbar>
      </Screen>
    </>
  );
}
